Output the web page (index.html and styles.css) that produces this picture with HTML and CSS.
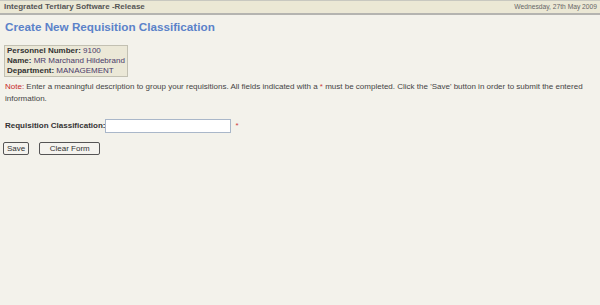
FILE: index.html
```html
<!DOCTYPE html>
<html lang="en">
<head>
  <meta charset="UTF-8" />
  <title>Create New Requisition Classification</title>
  <link rel="stylesheet" href="styles.css">
</head>
<body>
  <div class="topbar">
    <span class="app-name">Integrated Tertiary Software -Release</span>
    <span class="date">Wednesday, 27th May 2009</span>
  </div>

  <h1 class="page-title">Create New Requisition Classification</h1>

  <div class="person">
    <div><b>Personnel Number:</b> 9100</div>
    <div><b>Name:</b> MR Marchand Hildebrand</div>
    <div><b>Department:</b> MANAGEMENT</div>
  </div>

  <p class="note"><span class="note-label">Note:</span> Enter a meaningful description to group your requisitions. All fields indicated with a <span class="req">*</span> must be completed. Click the 'Save' button in order to submit the entered information.</p>

  <form class="form">
    <div class="field">
      <label for="classification">Requisition Classification:</label>
      <input type="text" id="classification">
      <span class="req">*</span>
    </div>
    <div class="actions">
      <button type="button" class="btn">Save</button>
      <button type="button" class="btn btn-wide">Clear Form</button>
    </div>
  </form>
</body>
</html>
```

FILE: styles.css
```css
body {
  margin: 0;
  background: #f3f2eb;
  font-family: "Liberation Sans", Arial, sans-serif;
  font-size: 8px;
  line-height: 12px;
  color: #222;
}

.topbar {
  display: flex;
  justify-content: space-between;
  align-items: center;
  height: 12px;
  padding: 0 3px 0 4px;
  background: #ebe8d5;
  border-top: 1px solid #c8c8c0;
  border-bottom: 2px solid #b4b4b0;
}

.app-name {
  font-weight: bold;
  color: #555;
}

.date {
  font-size: 6.7px;
  color: #666;
}

.page-title {
  margin: 4px 0 0 5px;
  font-size: 11.7px;
  line-height: 16px;
  color: #5b82c9;
}

.person {
  display: inline-block;
  margin: 10px 0 0 4px;
  padding: 0 2px 0 2px;
  background: #ebe8d7;
  border: 1px solid #c2c0b2;
  line-height: 10px;
  color: #4a3a6a;
}

.person b {
  color: #333;
}

.note {
  margin: 4px 4px 0 5px;
  color: #444;
}

.note-label {
  color: #c62828;
}

.req {
  color: #d04040;
}

.form {
  margin: 14px 0 0 5px;
}

.field {
  display: flex;
  align-items: center;
  gap: 4px;
}

.field label {
  font-weight: bold;
  color: #333;
  margin-right: -4px;
}

.field input {
  width: 122px;
  height: 10px;
  padding: 1px;
  border: 1px solid #a9b7c9;
  background: #fff;
  font: inherit;
}

.actions {
  display: flex;
  gap: 10px;
  margin: 9px 0 0 -2px;
}

.btn {
  height: 13px;
  padding: 0 3px;
  background: #f4f3ee;
  border: 1px solid #555;
  border-radius: 2px;
  font: inherit;
  line-height: 11px;
  color: #333;
}

.btn-wide {
  width: 61px;
}
```
